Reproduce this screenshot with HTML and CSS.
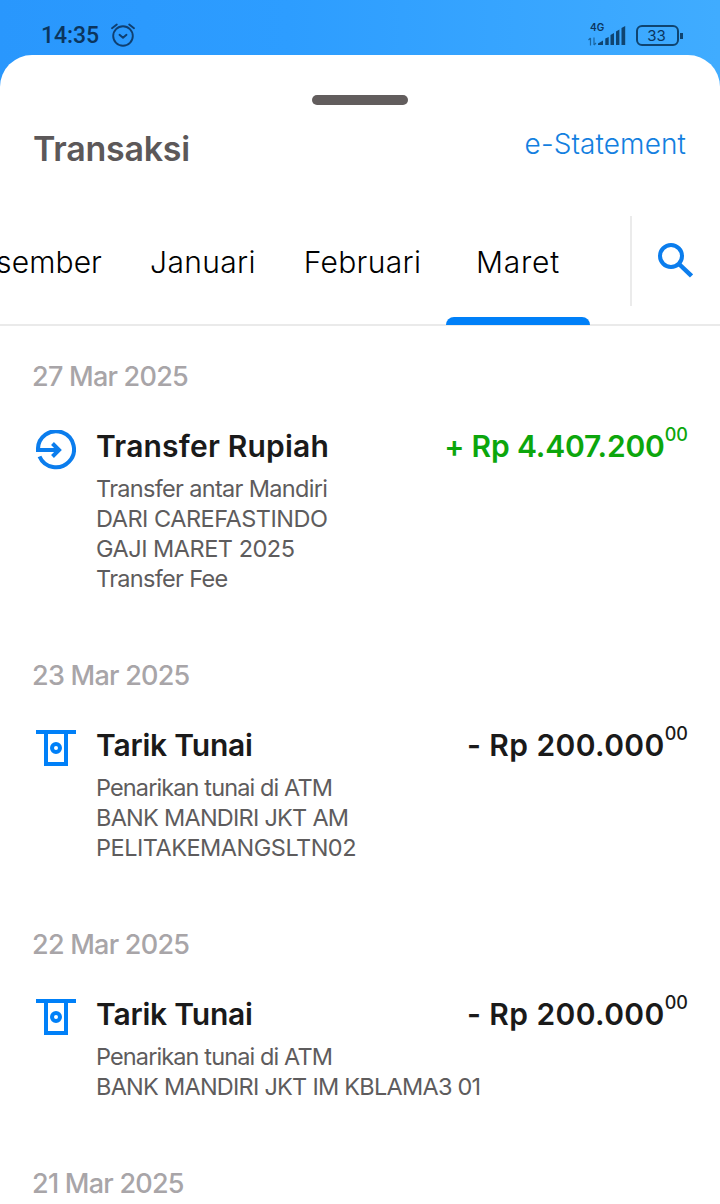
FILE: index.html
```html
<!DOCTYPE html>
<html lang="id">
<head>
<meta charset="utf-8">
<title>Transaksi</title>
<link rel="stylesheet" href="styles.css">
</head>
<body>
<div class="screen">
  <div class="status">
    <span class="clock">14:35</span>
    <svg class="alarm" width="26" height="26" viewBox="0 0 26 26" fill="none" stroke="#0f3f70" stroke-width="1.9" stroke-linecap="round" stroke-linejoin="round"><circle cx="13" cy="14" r="9.8"/><path d="M2 6.200 6.800 2.500M24 6.200 19.200 2.500M9.500 12.800 13 15.800 16.500 12.800"/></svg>
    <span class="grow"></span>
    <div class="network"><span class="net-label">4G</span>
      <svg width="9" height="9" viewBox="0 0 9 9" fill="none" stroke="#1b659f" stroke-width="1.2"><path d="M2.500 8.500V1M.5 3 2.500 1M6 .5V8M8 6 6 8"/></svg>
    </div>
    <svg class="signal" width="28" height="20" viewBox="0 0 28 20" fill="#0f4470"><path d="M0 20V18.500L5 15.500V20zM7.300 13.500 10.700 12V20H7.300zM12.500 10 16 8V20H12.500zM18 6.500 21.400 4.500V20H18zM23.500 3 27.200 1V20H23.500z"/></svg>
    <div class="battery">33</div><i class="battery-tip"></i>
  </div>
  <main class="sheet">
    <div class="handle"></div>
    <header class="head"><h1>Transaksi</h1><a class="link">e-Statement</a></header>
    <nav class="nav">
      <div class="tabs">
        <div class="tab december">Desember</div>
        <div class="tab january">Januari</div>
        <div class="tab february">Februari</div>
        <div class="tab march">Maret</div>
      </div>
      <div class="search"><svg width="36" height="36" viewBox="0 0 36 36" fill="none" stroke="#0b7ded" stroke-width="4"><circle cx="14" cy="14" r="11"/><path d="m22 22 12.500 12" stroke-width="4.500"/></svg></div>
    </nav>
    <section class="day">
      <h2>27 Mar 2025</h2>
      <div class="row">
        <svg class="icon" width="40" height="40" viewBox="0 0 40 40" fill="none" stroke="#0b7ded" stroke-width="4"><path d="M2 20A18 18 0 1 1 3.500 26.500M0 20H24M16.500 13.500 23 20 16.500 26.500"/></svg>
        <h3 class="transfer">Transfer Rupiah</h3>
        <div class="amount credit">+ Rp 4.407.200<sup>00</sup></div>
      </div>
      <div class="desc"><span class="mixed">Transfer antar Mandiri</span><span class="caps">DARI CAREFASTINDO</span><span class="caps">GAJI MARET 2025</span><span class="mixed">Transfer Fee</span></div>
    </section>
    <section class="day">
      <h2>23 Mar 2025</h2>
      <div class="row">
        <svg class="icon" width="40" height="40" viewBox="0 0 40 40" fill="none" stroke="#0080f8" stroke-width="4"><path d="M0 3H40M10 3V35H30V3"/><circle cx="20" cy="19" r="4"/></svg>
        <h3>Tarik Tunai</h3>
        <div class="amount">- Rp 200.000<sup>00</sup></div>
      </div>
      <div class="desc"><span class="tight">Penarikan tunai di ATM</span><span class="bank">BANK MANDIRI JKT AM</span><span class="caps">PELITAKEMANGSLTN02</span></div>
    </section>
    <section class="day">
      <h2>22 Mar 2025</h2>
      <div class="row">
        <svg class="icon" width="40" height="40" viewBox="0 0 40 40" fill="none" stroke="#0080f8" stroke-width="4"><path d="M0 3H40M10 3V35H30V3"/><circle cx="20" cy="19" r="4"/></svg>
        <h3>Tarik Tunai</h3>
        <div class="amount">- Rp 200.000<sup>00</sup></div>
      </div>
      <div class="desc"><span class="tight">Penarikan tunai di ATM</span><span class="bank">BANK MANDIRI JKT IM KBLAMA3 01</span></div>
    </section>
    <section class="day"><h2>21 Mar 2025</h2></section>
  </main>
</div>
</body>
</html>
```
FILE: styles.css
```css
* { box-sizing: border-box; }
body { margin: 0; font-family: Inter, sans-serif; background: #fff; }
.screen { width: 720px; height: 1204px; overflow: hidden; background: linear-gradient(90deg, #2997fd, #2d9dff 40%, #40acff); }
.status { height: 55px; display: flex; align-items: center; padding: 16px 37px 0 41px; color: #0b355e; }
.clock { font: 500 23px/27px Roboto, sans-serif; letter-spacing: -.1px; width: 68.5px; }
.alarm { margin-top: -1px; }
.grow { flex: 1; }
.network { width: 10px; height: 23px; display: flex; flex-direction: column; justify-content: space-between; margin-top: -3px; }
.net-label { font: 600 10px/9px Inter, sans-serif; padding-left: 2px; }
.signal { margin-top: -2px; }
.battery { width: 43px; height: 21px; margin-left: 10px; border: 2.5px solid #0f4470; border-radius: 6px; font: 400 15px/17px Inter, sans-serif; text-align: center; padding-right: 2px; }
.battery-tip { width: 3px; height: 6px; margin-left: 1px; background: #0f4470; }
.sheet { height: 1149px; background: #fff; border-radius: 32px 32px 0 0; overflow: hidden; padding-top: 40px; }
.handle { width: 96px; height: 10px; margin: 0 auto; border-radius: 5px; background: #625d5d; }
.head { height: 111px; padding: 24px 34px 0; display: flex; justify-content: space-between; }
h1, h2, h3 { margin: 0; }
h1 { font-size: 34px; line-height: 40px; font-weight: 600; letter-spacing: -.25px; margin-left: -1px; color: #5c5859; }
.link { color: #137fe0; font-size: 28px; line-height: 30px; font-weight: 350; letter-spacing: .1px; }
.nav { height: 110px; display: flex; border-bottom: 2px solid #eaeaea; }
.tabs { width: 630px; display: flex; justify-content: flex-end; padding-right: 40px; height: 109px; }
.tab { flex: none; height: 109px; line-height: 92px; text-align: center; font-size: 30px; font-weight: 350; letter-spacing: .35px; color: #000; }
.december { width: 190px; text-align: right; padding-right: 25px; letter-spacing: .1px; }
.january { width: 152px; }
.february { width: 167px; }
.march { width: 144px; display: flex; flex-direction: column; letter-spacing: .75px; }
.march::after { content: ""; height: 8px; margin-top: 9px; background: #0080f8; border-radius: 8px 8px 0 0; }
.search { width: 90px; height: 90px; border-left: 2px solid #ebebeb; display: flex; align-items: center; justify-content: center; padding: 0 2px 2px 0; }
.day { padding: 34px 32px 31px; }
h2 { font-size: 27px; line-height: 34px; font-weight: 500; letter-spacing: -.75px; color: #a8a5a8; }
.row { display: flex; padding: 34px 0 0 4px; height: 80px; }
.icon { margin: 2px 20px 0 0; flex: none; }
h3 { flex: 1; font-size: 30px; line-height: 36px; font-weight: 600; letter-spacing: -.2px; color: #1a1a1a; }
.transfer { letter-spacing: .2px; }
.amount { font-size: 30px; line-height: 36px; font-weight: 600; letter-spacing: .4px; color: #1a1a1a; white-space: nowrap; }
.credit { letter-spacing: -.15px; color: #0ca60c; }
sup { font-size: 18px; line-height: 0; font-weight: 500; letter-spacing: 0; vertical-align: 16px; }
.desc { padding-left: 64px; display: flex; flex-direction: column; align-items: flex-start; }
.desc span { font-size: 23.500px; line-height: 30px; font-weight: 370; color: #5e5c5d; white-space: nowrap; }
.desc .mixed { letter-spacing: -.68px; }
.desc .caps { letter-spacing: -.49px; }
.desc .tight { letter-spacing: -.88px; }
.desc .bank { letter-spacing: -.75px; }
```
